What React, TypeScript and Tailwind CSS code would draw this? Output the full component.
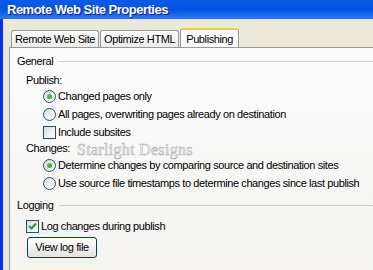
import React from 'react';

function Radio({ checked }: { checked?: boolean }) {
  return (
    <span className="w-[13px] h-[13px] shrink-0 rounded-full border border-[#1c5180] bg-gradient-to-br from-[#dcdcd7] to-white flex items-center justify-center">
      {checked && <span className="w-[5px] h-[5px] rounded-full bg-gradient-to-br from-[#55d551] to-[#21a121]" />}
    </span>
  );
}

function Check({ checked }: { checked?: boolean }) {
  return (
    <span className="w-[13px] h-[13px] shrink-0 border border-[#1c5180] bg-gradient-to-br from-[#dcdcd7] to-white flex items-center justify-center">
      {checked && (
        <svg width="9" height="9" viewBox="0 0 9 9">
          <path d="M1 4 L3.5 6.5 L8 1.5" stroke="#21a121" strokeWidth="2" fill="none" />
        </svg>
      )}
    </span>
  );
}

function Option({ children, checked, box, className = '' }: { children: React.ReactNode; checked?: boolean; box?: boolean; className?: string }) {
  return (
    <div className={`flex items-center gap-[2px] h-[18px] pl-[33px] whitespace-nowrap ${className}`}>
      {box ? <Check checked={checked} /> : <Radio checked={checked} />}
      <span>{children}</span>
    </div>
  );
}

function GroupTitle({ children, className = '' }: { children: React.ReactNode; className?: string }) {
  return (
    <div className={`flex items-center gap-[6px] h-[14px] pl-[7px] ${className}`}>
      <span>{children}</span>
      <span className="flex-1 h-px bg-[#d0d0bf]" />
    </div>
  );
}

export default function App() {
  return (
    <div className="w-[373px] h-[270px] overflow-hidden flex flex-col bg-[#ece9d8] text-[11px] tracking-[-0.4px] text-black font-['Liberation_Sans',Arial,sans-serif]">
      <div className="h-[19px] shrink-0 bg-gradient-to-b from-[#0a5ae6] via-[#0054e3] to-[#2a7cf0] flex items-center pl-[7px]">
        <span className="text-white font-bold text-[13px] tracking-[-0.5px] [text-shadow:1px_1px_0_#0a1e8c]">Remote Web Site Properties</span>
      </div>
      <div className="flex-1 flex">
        <div className="w-[3px] bg-[#0831d9] shrink-0" />
        <div className="flex-1 flex flex-col pl-[6px] pt-[8px]">
          <div className="flex items-end h-[20px] pl-[2px] whitespace-nowrap">
            <div className="h-[17px] px-[3px] border border-b-0 border-[#919b9c] rounded-t-[3px] bg-gradient-to-b from-white to-[#ecebe6] flex items-center">Remote Web Site</div>
            <div className="h-[17px] px-[3px] ml-px border border-b-0 border-[#919b9c] rounded-t-[3px] bg-gradient-to-b from-white to-[#ecebe6] flex items-center">Optimize HTML</div>
            <div className="h-[20px] px-[5px] ml-px border border-b-0 border-[#919b9c] border-t-2 border-t-[#ffc83c] rounded-t-[3px] bg-[#fcfcfe] flex items-center relative top-px">Publishing</div>
          </div>
          <div className="relative flex-1 border-l border-t border-[#919b9c] bg-gradient-to-b from-[#fcfcfe] to-[#f4f3ee] pt-[6px]">
            <GroupTitle>General</GroupTitle>
            <div className="pl-[16px] h-[14px] mt-[5px] flex items-center">Publish:</div>
            <Option checked>Changed pages only</Option>
            <Option>All pages, overwriting pages already on destination</Option>
            <Option box>Include subsites</Option>
            <div className="pl-[16px] h-[15px] flex items-center">Changes:</div>
            <Option checked>Determine changes by comparing source and destination sites</Option>
            <Option>Use source file timestamps to determine changes since last publish</Option>
            <GroupTitle className="mt-[6px]">Logging</GroupTitle>
            <div className="flex items-center gap-[2px] h-[18px] pl-[16px] mt-[5px]">
              <Check checked />
              <span>Log changes during publish</span>
            </div>
            <div className="pl-[17px] mt-[2px]">
              <button className="w-[70px] h-[21px] rounded-[3px] border border-[#003c74] bg-gradient-to-b from-white to-[#e3e2da] text-[11px] tracking-[-0.4px] font-['Liberation_Sans',Arial,sans-serif]">View log file</button>
            </div>
            <span className="absolute left-[67px] top-[94px] text-[16px] leading-none text-[#f4f4f4] tracking-[0.3px] font-['Liberation_Serif',serif] [-webkit-text-stroke:0.6px_#b4b4b4]">
              Starlight Designs
            </span>
          </div>
        </div>
      </div>
    </div>
  );
}
